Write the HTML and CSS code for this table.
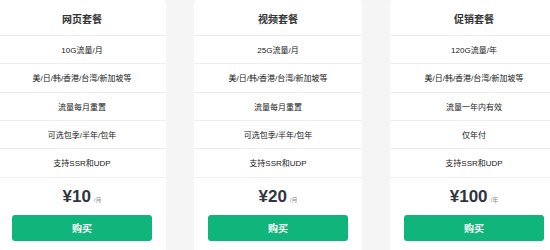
FILE: index.html
```html
<!DOCTYPE html>
<html lang="zh-CN">
<head>
<meta charset="utf-8">
<title>套餐</title>
<link rel="stylesheet" href="styles.css">
</head>
<body>
<div class="plans">
  <div class="card">
    <div class="card-title">网页套餐</div>
    <div class="feature">10G流量/月</div>
    <div class="feature">美/日/韩/香港/台湾/新加坡等</div>
    <div class="feature">流量每月重置</div>
    <div class="feature">可选包季/半年/包年</div>
    <div class="feature">支持SSR和UDP</div>
    <div class="price"><span class="amount">¥10</span><span class="unit">/月</span></div>
    <div class="buy">购买</div>
  </div>
  <div class="card">
    <div class="card-title">视频套餐</div>
    <div class="feature">25G流量/月</div>
    <div class="feature">美/日/韩/香港/台湾/新加坡等</div>
    <div class="feature">流量每月重置</div>
    <div class="feature">可选包季/半年/包年</div>
    <div class="feature">支持SSR和UDP</div>
    <div class="price"><span class="amount">¥20</span><span class="unit">/月</span></div>
    <div class="buy">购买</div>
  </div>
  <div class="card">
    <div class="card-title">促销套餐</div>
    <div class="feature">120G流量/年</div>
    <div class="feature">美/日/韩/香港/台湾/新加坡等</div>
    <div class="feature">流量一年内有效</div>
    <div class="feature">仅年付</div>
    <div class="feature">支持SSR和UDP</div>
    <div class="price"><span class="amount">¥100</span><span class="unit">/年</span></div>
    <div class="buy">购买</div>
  </div>
</div>
</body>
</html>
```

FILE: styles.css
```css
html, body {
  margin: 0;
  padding: 0;
  height: 250px;
  background: #f5f5f5;
  overflow: hidden;
  font-family: "Liberation Sans", "Noto Sans CJK SC", sans-serif;
  color: #333;
}

.plans {
  display: flex;
  gap: 28px;
  margin-left: -2px;
  height: 250px;
}

.card {
  flex: 0 0 168px;
  width: 168px;
  background: #fff;
  border-radius: 4px 4px 0 0;
}

.card-title {
  height: 36px;
  box-sizing: border-box;
  border-bottom: 1px solid #eeeeee;
  display: flex;
  align-items: center;
  justify-content: center;
  font-size: 10px;
  font-weight: bold;
  color: #333;
  padding-top: 2px;
}

.feature {
  height: 28.33px;
  box-sizing: border-box;
  border-bottom: 1px solid #eeeeee;
  display: flex;
  align-items: center;
  justify-content: center;
  font-size: 8px;
  color: #222;
}

.price {
  height: 37.3px;
  display: flex;
  align-items: baseline;
  justify-content: center;
  padding-top: 9px;
  box-sizing: border-box;
}

.amount {
  font-size: 17px;
  font-weight: bold;
  color: #2f3441;
}

.unit {
  font-size: 6px;
  color: #888;
  margin-left: 3px;
}

.buy {
  margin: 0 14px;
  height: 26px;
  border-radius: 3px;
  background: #0fb57a;
  color: #fff;
  font-size: 10px;
  font-weight: bold;
  display: flex;
  align-items: center;
  justify-content: center;
}
```
